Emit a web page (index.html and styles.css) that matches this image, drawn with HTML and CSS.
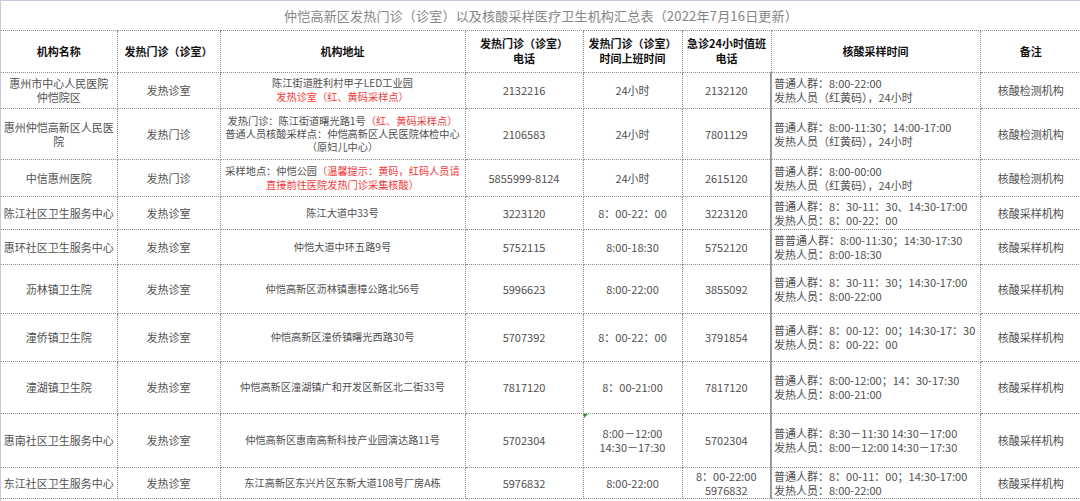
FILE: index.html
```html
<!DOCTYPE html>
<html lang="zh">
<head>
<meta charset="utf-8">
<title>仲恺高新区发热门诊汇总表</title>
<link rel="stylesheet" href="styles.css">
</head>
<body>
<div class="sheet">
<table class="grid">
  <colgroup>
    <col class="c1"><col class="c2"><col class="c3"><col class="c4"><col class="c5"><col class="c6"><col class="c7"><col class="c8">
  </colgroup>
  <tr class="r-title"><td colspan="8" class="title">仲恺高新区发热门诊（诊室）以及核酸采样医疗卫生机构汇总表（2022年7月16日更新）</td></tr>
  <tr class="r-head">
    <th>机构名称</th>
    <th>发热门诊（诊室）</th>
    <th>机构地址</th>
    <th>发热门诊（诊室）<br>电话</th>
    <th>发热门诊（诊室）<br>时间上班时间</th>
    <th>急诊24小时值班<br>电话</th>
    <th>核酸采样时间</th>
    <th>备注</th>
  </tr>
  <tr class="r1">
    <td>惠州市中心人民医院<br>仲恺院区</td>
    <td>发热诊室</td>
    <td class="addr">陈江街道胜利村甲子LED工业园<br><span class="red">发热诊室（红、黄码采样点）</span></td>
    <td>2132216</td>
    <td>24小时</td>
    <td>2132120</td>
    <td class="left">普通人群：8:00-22:00<br>发热人员（红黄码），24小时</td>
    <td>核酸检测机构</td>
  </tr>
  <tr class="r2">
    <td>惠州仲恺高新区人民医<br>院</td>
    <td>发热门诊</td>
    <td class="addr tight">发热门诊：陈江街道曙光路1号<span class="red">（红、黄码采样点）</span><br>普通人员核酸采样点：仲恺高新区人民医院体检中心<br>（原妇儿中心）</td>
    <td>2106583</td>
    <td>24小时</td>
    <td>7801129</td>
    <td class="left">普通人群：8:00-11:30；14:00-17:00<br>发热人员（红黄码），24小时</td>
    <td>核酸检测机构</td>
  </tr>
  <tr class="r3">
    <td>中信惠州医院</td>
    <td>发热门诊</td>
    <td class="addr">采样地点：仲恺公园<span class="red">（温馨提示：黄码，红码人员请<br>直接前往医院发热门诊采集核酸）</span></td>
    <td>5855999-8124</td>
    <td>24小时</td>
    <td>2615120</td>
    <td class="left">普通人群：8:00-00:00<br>发热人员（红黄码），24小时</td>
    <td>核酸检测机构</td>
  </tr>
  <tr class="r4">
    <td>陈江社区卫生服务中心</td>
    <td>发热诊室</td>
    <td class="addr">陈江大道中33号</td>
    <td>3223120</td>
    <td>8：00-22：00</td>
    <td>3223120</td>
    <td class="left">普通人群：8：30-11：30、14:30-17:00<br>发热人员：8：00-22：00</td>
    <td>核酸采样机构</td>
  </tr>
  <tr class="r5">
    <td>惠环社区卫生服务中心</td>
    <td>发热诊室</td>
    <td class="addr">仲恺大道中环五路9号</td>
    <td>5752115</td>
    <td>8:00-18:30</td>
    <td>5752120</td>
    <td class="left">普普通人群：8:00-11:30；14:30-17:30<br>发热人员：8:00-18:30</td>
    <td>核酸采样机构</td>
  </tr>
  <tr class="r6">
    <td>沥林镇卫生院</td>
    <td>发热诊室</td>
    <td class="addr">仲恺高新区沥林镇惠樟公路北56号</td>
    <td>5996623</td>
    <td>8:00-22:00</td>
    <td>3855092</td>
    <td class="left">普通人群：8：30-11：30；14:30-17:00<br>发热人员：8:00-22:00</td>
    <td>核酸采样机构</td>
  </tr>
  <tr class="r7">
    <td>潼侨镇卫生院</td>
    <td>发热诊室</td>
    <td class="addr">仲恺高新区潼侨镇曙光西路30号</td>
    <td>5707392</td>
    <td>8：00-22：00</td>
    <td>3791854</td>
    <td class="left">普通人群：8：00-12：00；14:30-17：30<br>发热人员：8：00-22：00</td>
    <td>核酸采样机构</td>
  </tr>
  <tr class="r8">
    <td>潼湖镇卫生院</td>
    <td>发热诊室</td>
    <td class="addr">仲恺高新区潼湖镇广和开发区新区北二街33号</td>
    <td>7817120</td>
    <td>8：00-21:00</td>
    <td>7817120</td>
    <td class="left">普通人群：8:00-12:00；14：30-17:30<br>发热人员：8:00-21:00</td>
    <td>核酸采样机构</td>
  </tr>
  <tr class="r9">
    <td>惠南社区卫生服务中心</td>
    <td>发热诊室</td>
    <td class="addr">仲恺高新区惠南高新科技产业园演达路11号</td>
    <td>5702304</td>
    <td class="marked">8:00－12:00<br>14:30－17:30</td>
    <td>5702304</td>
    <td class="left">普通人群：8:30－11:30 14:30－17:00<br>发热人员：8:00－12:00 14:30－17:30</td>
    <td>核酸采样机构</td>
  </tr>
  <tr class="r10">
    <td>东江社区卫生服务中心</td>
    <td>发热诊室</td>
    <td class="addr">东江高新区东兴片区东新大道108号厂房A栋</td>
    <td>5976832</td>
    <td>8:00-22:00</td>
    <td>8：00-22:00<br>5976832</td>
    <td class="left">普通人群：8：00-11：00；14:30-17:00<br>发热人员：8:00-22:00</td>
    <td>核酸采样机构</td>
  </tr>
</table>
</div>
</body>
</html>
```
FILE: styles.css
```css
html, body {
  margin: 0;
  padding: 0;
  background: #ffffff;
}
body {
  width: 1080px;
  height: 501px;
  overflow: hidden;
  box-sizing: border-box;
  border-top: 1px solid #c9c9dd;
  border-left: 1px solid #c9c9dd;
}
.sheet {
  width: 1080px;
}
.grid {
  border-collapse: collapse;
  table-layout: fixed;
  width: 1080px;
  font-family: "Noto Sans CJK SC", "Noto Sans", sans-serif;
  font-size: 11px;
  line-height: 14px;
  color: #505050;
}
.c1 { width: 116px; }
.c2 { width: 103px; }
.c3 { width: 245px; }
.c4 { width: 118px; }
.c5 { width: 99px; }
.c6 { width: 89px; }
.c7 { width: 209px; }
.c8 { width: 101px; }
.grid td, .grid th {
  border: 1px dotted #8a8a8a;
  padding: 0 1px;
  text-align: center;
  vertical-align: middle;
  overflow: hidden;
  white-space: nowrap;
}
.grid th {
  font-weight: bold;
  color: #111;
  font-size: 11px;
  line-height: 15px;
}
.grid td.title {
  border-left: none;
  border-right: none;
  border-top: none;
  font-size: 13px;
  color: #858585;
  letter-spacing: 0.2px;
  padding-top: 2px;
}
.grid td.addr {
  font-size: 10.2px;
}
.grid td.tight {
  line-height: 13px;
}
.grid td.left {
  text-align: left;
  padding-left: 2px;
  border-left: 2px solid #9a9a9a;
}
.grid td:last-child, .grid th:last-child {
  border-right: none;
}
.grid td:first-child, .grid th:first-child {
  border-left: none;
}
.red { color: #f23a3a; }
.marked { position: relative; }
.marked::before {
  content: "";
  position: absolute;
  left: 0;
  top: 0;
  border-top: 4px solid #18a018;
  border-right: 4px solid transparent;
}
.r-title { height: 29px; }
.r-head { height: 42px; }
.r1 { height: 36px; }
.r2 { height: 51px; }
.r3 { height: 37px; }
.r4 { height: 33px; }
.r5 { height: 35px; }
.r6 { height: 49px; }
.r7 { height: 48px; }
.r8 { height: 52px; }
.r9 { height: 54px; }
.r10 { height: 31px; }
```
